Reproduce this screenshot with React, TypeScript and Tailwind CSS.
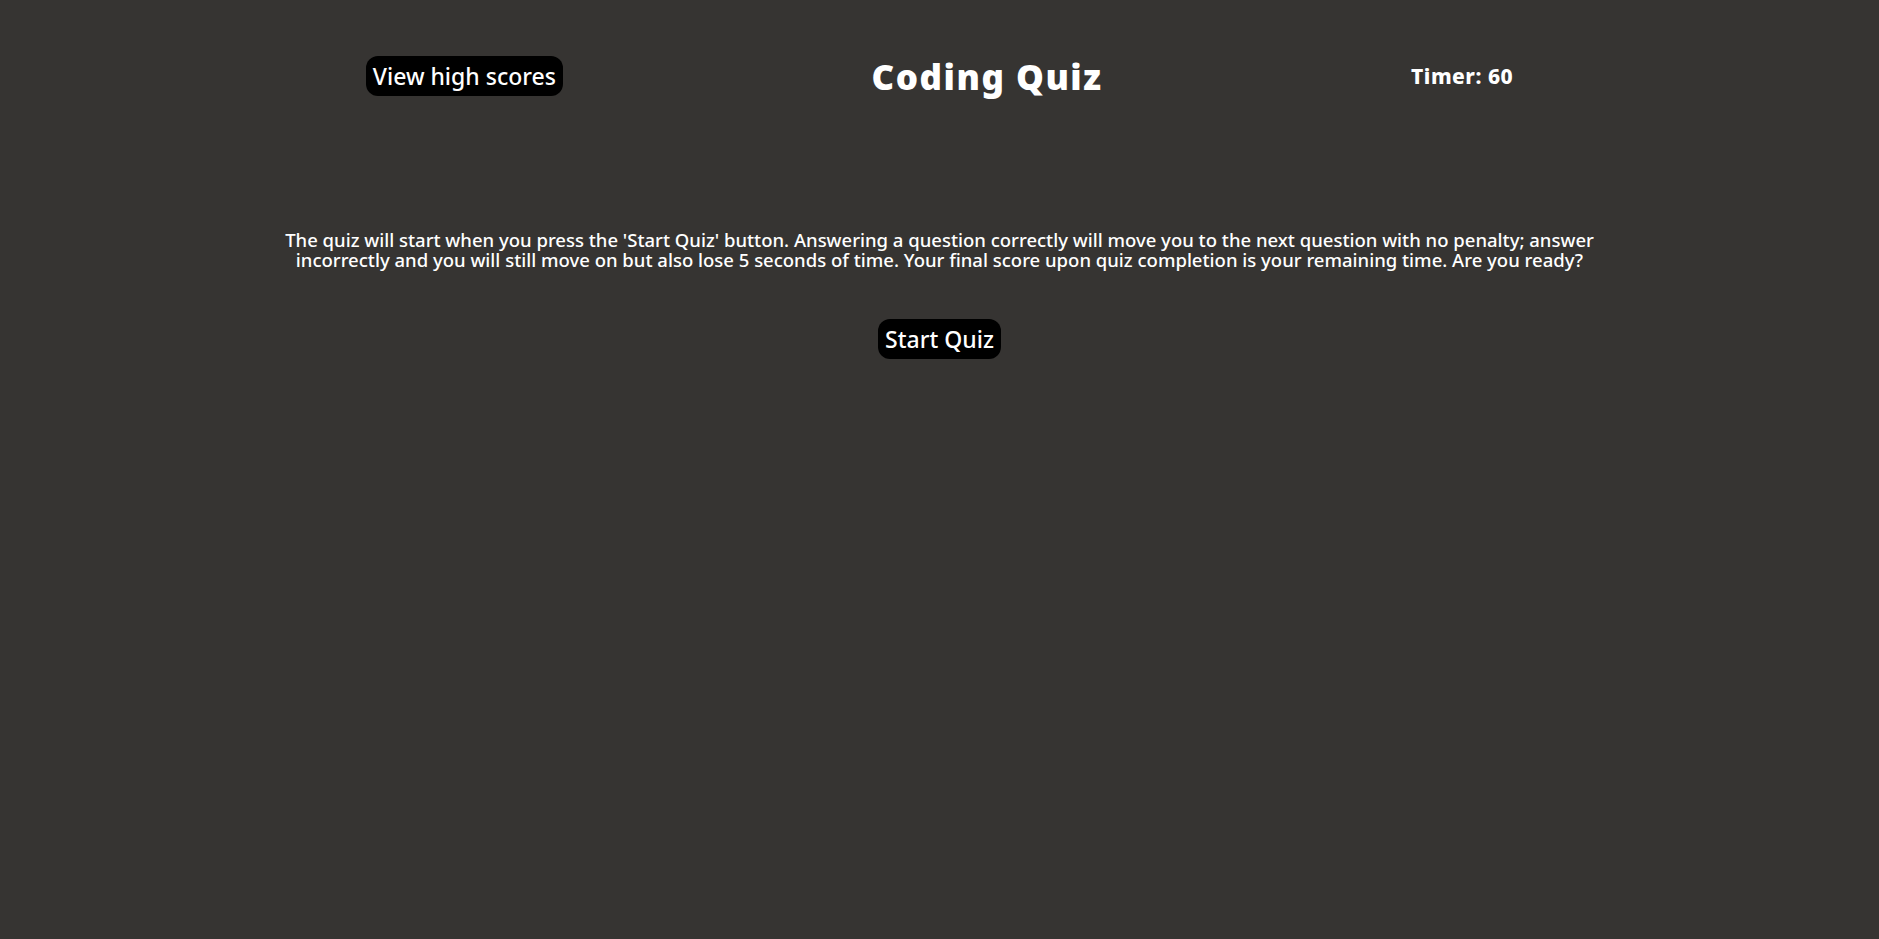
export default function App() {
  return (
    <div className="min-h-screen bg-[#363432] text-white font-['Noto_Sans',sans-serif]">
      <header className="mx-auto flex w-[1456px] items-center justify-around pt-[56px]">
        <button className="h-[40px] rounded-xl bg-black px-[7px] text-[23px] font-medium leading-none">
          View high scores
        </button>
        <h1 className="pt-[1px] text-[35px] font-black leading-none tracking-[1.5px]">Coding Quiz</h1>
        <div className="pt-[1px] text-[21px] font-extrabold leading-none tracking-[0.5px]">Timer: 60</div>
      </header>

      <main className="mt-[134px] flex flex-col items-center">
        <p className="text-center text-[18.5px] font-medium leading-[20px]">
          The quiz will start when you press the 'Start Quiz' button. Answering a question correctly will move you to the next question with no penalty; answer
          <br />
          incorrectly and you will still move on but also lose 5 seconds of time. Your final score upon quiz completion is your remaining time. Are you ready?
        </p>
        <button className="mt-[49px] h-[40px] rounded-xl bg-black px-[7px] text-[23px] font-medium leading-none">
          Start Quiz
        </button>
      </main>
    </div>
  );
}
